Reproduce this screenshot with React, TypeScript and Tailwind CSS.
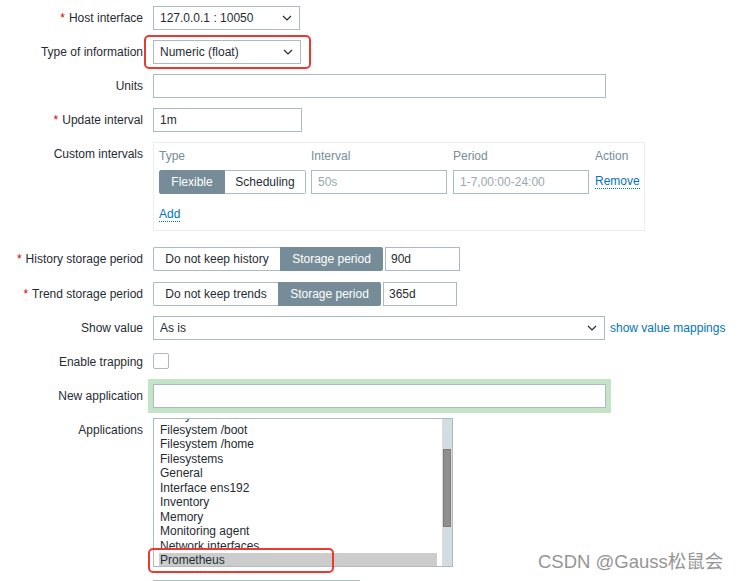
import React from 'react';

const Chevron = () => (
  <svg width="10" height="6" viewBox="0 0 10 6" className="shrink-0">
    <polyline points="1,1 5,5 9,1" fill="none" stroke="#1f2c33" strokeWidth="1.2" />
  </svg>
);

function Label({ text, required }: { text: string; required?: boolean }) {
  return (
    <div className="w-[143px] shrink-0 text-right h-[24px] leading-[24px] whitespace-nowrap">
      {required && <span className="text-[#d40000] mr-[4px]">*</span>}
      {text}
    </div>
  );
}

function Select({ value, width }: { value: string; width: string }) {
  return (
    <div className={`${width} h-[24px] border border-[#acbbc2] bg-white flex items-center justify-between pl-[6px] pr-[7px]`}>
      <span>{value}</span>
      <Chevron />
    </div>
  );
}

const apps = [
  'Filesystem /',
  'Filesystem /boot',
  'Filesystem /home',
  'Filesystems',
  'General',
  'Interface ens192',
  'Inventory',
  'Memory',
  'Monitoring agent',
  'Network interfaces',
  'Prometheus',
];

export default function App() {
  return (
    <div className="relative w-[741px] h-[581px] overflow-hidden bg-white text-[12px] text-[#1f2c33] font-['Liberation_Sans',Arial,sans-serif]">
      <div className="flex flex-col">
        {/* Host interface */}
        <div className="flex mt-[6px]">
          <Label text="Host interface" required />
          <div className="ml-[10px]">
            <Select value="127.0.0.1 : 10050" width="w-[147px]" />
          </div>
        </div>

        {/* Type of information */}
        <div className="flex mt-[10px]">
          <Label text="Type of information" />
          <div className="ml-[10px]">
            <Select value="Numeric (float)" width="w-[148px]" />
          </div>
        </div>

        {/* Units */}
        <div className="flex mt-[10px]">
          <Label text="Units" />
          <div className="ml-[10px] w-[453px] h-[24px] border border-[#acbbc2]" />
        </div>

        {/* Update interval */}
        <div className="flex mt-[10px]">
          <Label text="Update interval" required />
          <div className="ml-[10px] w-[149px] h-[24px] border border-[#acbbc2] pl-[6px] leading-[22px]">1m</div>
        </div>

        {/* Custom intervals */}
        <div className="flex mt-[10px]">
          <Label text="Custom intervals" />
          <div className="ml-[10px] w-[492px] h-[89px] border border-[#ebeef0] pl-[5px] pt-[3px]">
            <div className="flex h-[20px] leading-[20px] text-[#768d99]">
              <div className="w-[152px]">Type</div>
              <div className="w-[142px]">Interval</div>
              <div className="w-[142px]">Period</div>
              <div>Action</div>
            </div>
            <div className="flex items-center mt-[4px]">
              <div className="flex h-[24px]">
                <div className="w-[66px] bg-[#768d99] text-white rounded-l-[2px] flex items-center justify-center border border-[#768d99]">Flexible</div>
                <div className="w-[81px] border border-l-0 border-[#acbbc2] rounded-r-[2px] flex items-center justify-center">Scheduling</div>
              </div>
              <div className="ml-[5px] w-[136px] h-[24px] border border-[#acbbc2] pl-[6px] leading-[22px] text-[#9aa8af]">50s</div>
              <div className="ml-[6px] w-[136px] h-[24px] border border-[#acbbc2] pl-[6px] leading-[22px] text-[#9aa8af]">1-7,00:00-24:00</div>
              <span className="ml-[6px] text-[#0275b8] border-b border-dotted border-[#0275b8] leading-[13px]">Remove</span>
            </div>
            <div className="mt-[11px]">
              <span className="text-[#0275b8] border-b border-dotted border-[#0275b8] leading-[13px] inline-block">Add</span>
            </div>
          </div>
        </div>

        {/* History storage period */}
        <div className="flex mt-[16px]">
          <Label text="History storage period" required />
          <div className="ml-[10px] flex h-[24px]">
            <div className="w-[127px] border border-r-0 border-[#acbbc2] rounded-l-[2px] flex items-center justify-center">Do not keep history</div>
            <div className="w-[103px] bg-[#768d99] text-white rounded-r-[2px] flex items-center justify-center">Storage period</div>
            <div className="ml-[2px] w-[75px] border border-[#acbbc2] pl-[5px] leading-[22px]">90d</div>
          </div>
        </div>

        {/* Trend storage period */}
        <div className="flex mt-[11px]">
          <Label text="Trend storage period" required />
          <div className="ml-[10px] flex h-[24px]">
            <div className="w-[125px] border border-r-0 border-[#acbbc2] rounded-l-[2px] flex items-center justify-center">Do not keep trends</div>
            <div className="w-[103px] bg-[#768d99] text-white rounded-r-[2px] flex items-center justify-center">Storage period</div>
            <div className="ml-[2px] w-[74px] border border-[#acbbc2] pl-[5px] leading-[22px]">365d</div>
          </div>
        </div>

        {/* Show value */}
        <div className="flex mt-[10px] items-center">
          <Label text="Show value" />
          <div className="ml-[10px]">
            <Select value="As is" width="w-[452px]" />
          </div>
          <span className="ml-[5px] text-[#0275b8]">show value mappings</span>
        </div>

        {/* Enable trapping */}
        <div className="flex mt-[10px]">
          <Label text="Enable trapping" />
          <div className="ml-[10px] mt-[3px] w-[16px] h-[16px] border border-[#acbbc2] rounded-[2px]" />
        </div>

        {/* New application */}
        <div className="flex mt-[10px]">
          <Label text="New application" />
          <div className="ml-[10px] w-[453px] h-[24px] border border-[#acbbc2] shadow-[0_0_0_5px_#c3e4c6]" />
        </div>

        {/* Applications */}
        <div className="flex mt-[10px]">
          <Label text="Applications" />
          <div className="ml-[10px] relative w-[300px] h-[149px] border border-[#acbbc2] overflow-hidden">
            <div className="pl-[5px] pr-[15px] -mt-[11px]">
              {apps.map((a) => (
                <div
                  key={a}
                  className={`h-[14.5px] leading-[14.5px] pl-[1px] whitespace-nowrap ${a === 'Prometheus' ? 'bg-[#cccccc]' : ''}`}
                >
                  {a}
                </div>
              ))}
            </div>
            <div className="absolute right-0 top-0 bottom-0 w-[10px] bg-[#d3dce1]">
              <div className="mt-[30px] mx-[1px] h-[78px] bg-[#8f8f8f] border border-[#7d7d7d]" />
            </div>
          </div>
        </div>

        <div className="flex mt-[13px]">
          <div className="w-[143px] shrink-0" />
          <div className="ml-[10px] w-[207px] h-[24px] border border-[#acbbc2]" />
        </div>
      </div>

      {/* annotation boxes */}
      <div className="absolute left-[144px] top-[35px] w-[167px] h-[34px] border-2 border-[#ea3a30] rounded-[5px]" />
      <div className="absolute left-[148px] top-[548px] w-[186px] h-[25px] border-2 border-[#ea3a30] rounded-[5px]" />

      {/* watermark */}
      <div className="absolute left-[538px] top-[550px] text-[18.5px] leading-[24px] text-[#959595] whitespace-nowrap font-['Liberation_Sans','Noto_Sans_CJK_SC',sans-serif]">
        CSDN @Gauss松鼠会
      </div>
    </div>
  );
}
